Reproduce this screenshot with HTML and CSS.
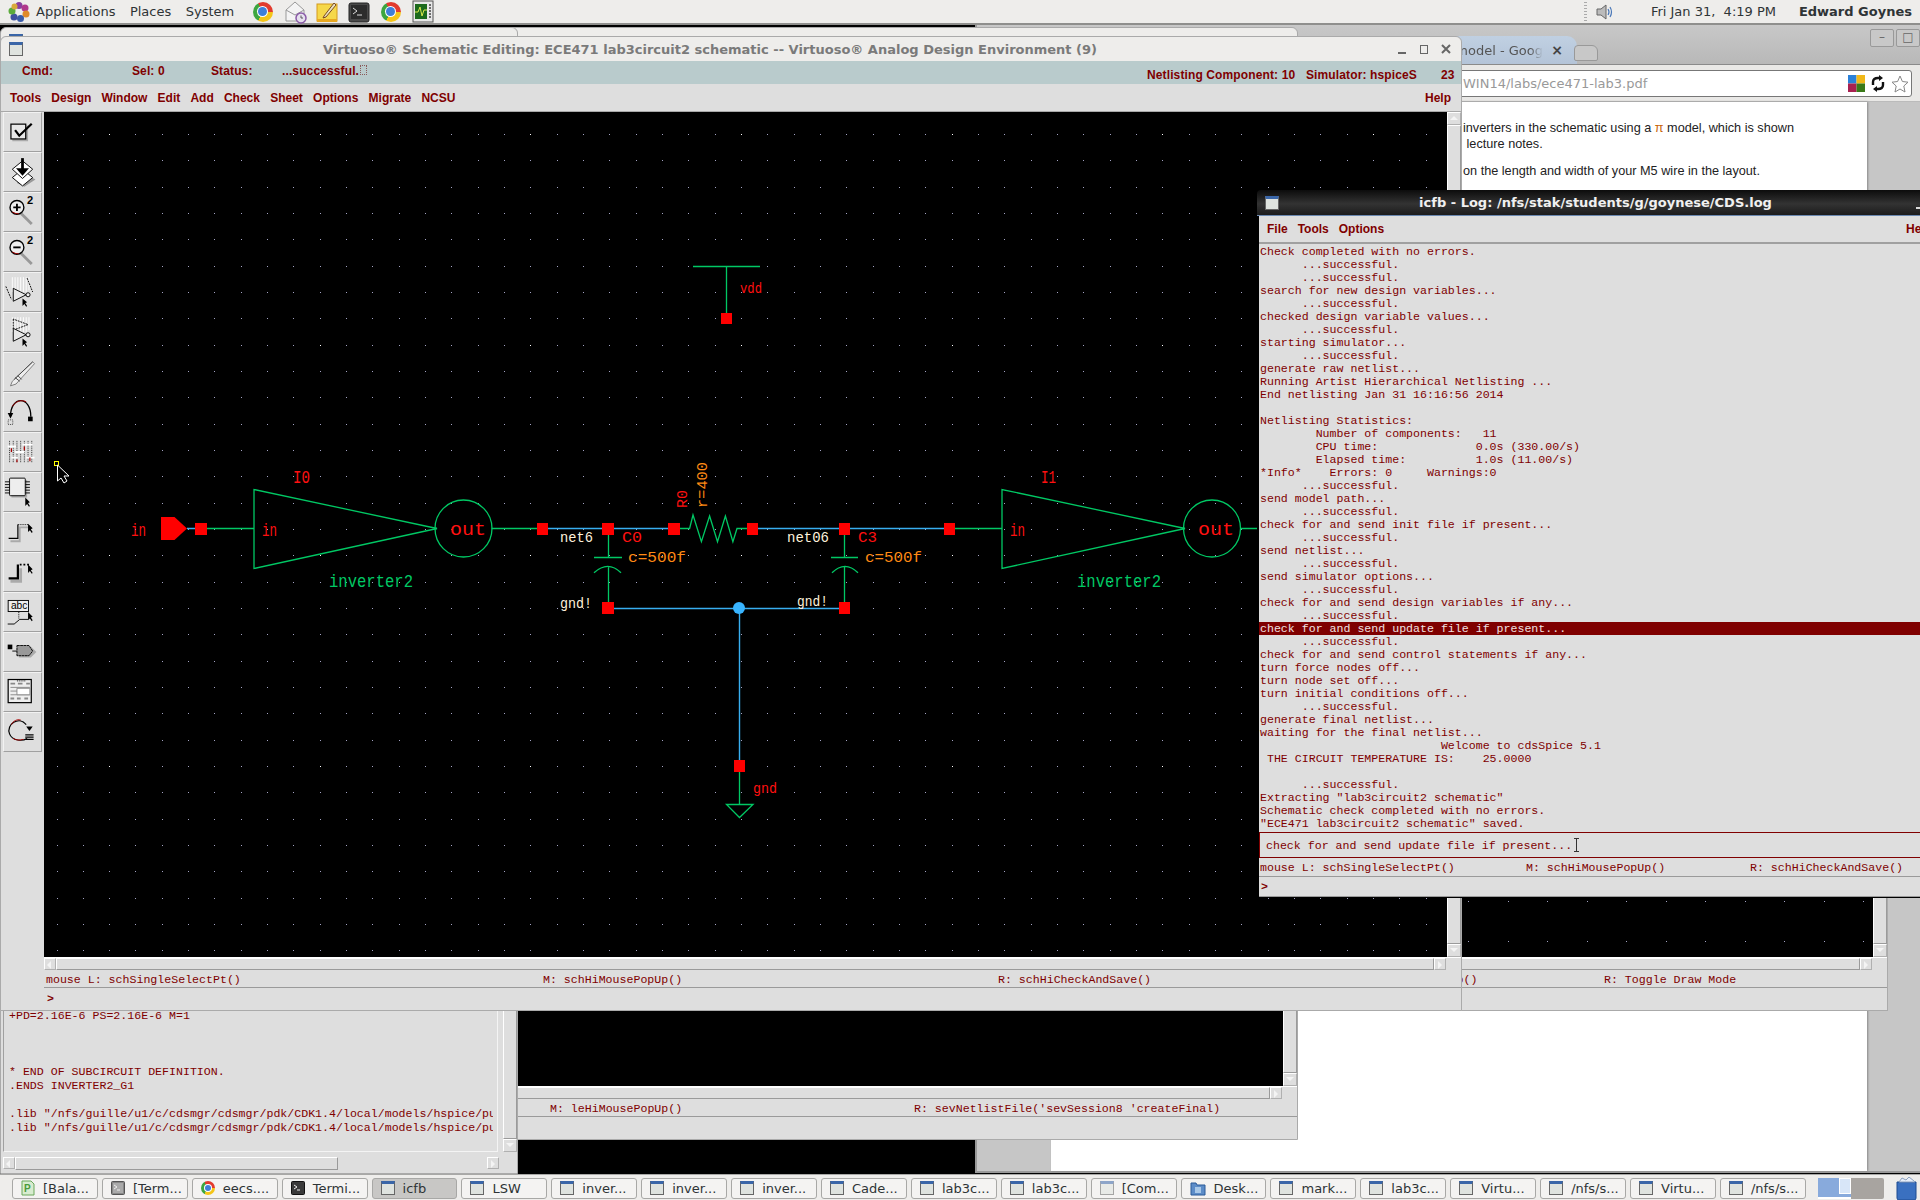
FILE: index.html
```html
<!DOCTYPE html>
<html lang="en">
<head>
  <meta charset="UTF-8" />
  <title>Virtuoso Schematic Editing</title>
  <link rel="stylesheet" href="styles.css">
</head>
<body>

  <!-- top gnome panel -->
  <div class="panel">
    <svg class="foot" width="24" height="22" viewBox="0 0 24 22">
      <circle cx="12" cy="4.5" r="3.5" fill="#8a3fa0"/><circle cx="18" cy="7" r="3.5" fill="#b0388c"/>
      <circle cx="19" cy="13" r="3.5" fill="#e08a2a"/><circle cx="13.5" cy="17.5" r="3.5" fill="#3a5ba8"/>
      <circle cx="7" cy="16" r="3.5" fill="#3f4fa0"/><circle cx="5" cy="10" r="3.5" fill="#5cab3c"/>
      <circle cx="7.5" cy="5.5" r="3" fill="#d9a83a"/><circle cx="12" cy="11" r="3" fill="#eee"/>
    </svg>
    <span class="panel-menu">Applications</span>
    <span class="panel-menu">Places</span>
    <span class="panel-menu">System</span>
    <div class="launchers">
      <span class="chrome big"></span>
      <svg width="24" height="24" viewBox="0 0 24 24"><path d="M3 10 L12 2 L21 10 V21 H3Z" fill="#f4f4f4" stroke="#999"/><path d="M3 10 L12 15 L21 10" fill="none" stroke="#999"/><circle cx="18" cy="18" r="5" fill="#e6e0ee" stroke="#8a5aa8" stroke-width="1.5"/><path d="M18 15.5V18H20" fill="none" stroke="#555"/></svg>
      <svg width="24" height="24" viewBox="0 0 24 24"><rect x="2" y="4" width="20" height="17" fill="#f6d84a" stroke="#d49a1c"/><rect x="2" y="19" width="20" height="3" fill="#e8a820"/><path d="M9 16 L19 3 L21 5 L11 17 L8 18Z" fill="#e8e0c0" stroke="#7a4a20"/></svg>
      <svg width="24" height="24" viewBox="0 0 24 24"><rect x="2" y="3" width="20" height="19" rx="2" fill="#4a4a4a" stroke="#222"/><rect x="4" y="5" width="16" height="14" fill="#2c2c2c"/><path d="M6 8 L10 11 L6 14" fill="none" stroke="#ddd"/><path d="M10 15H15" stroke="#ddd"/></svg>
      <span class="chrome big"></span>
      <svg width="24" height="24" viewBox="0 0 24 24"><rect x="2" y="1" width="20" height="21" fill="#e8e8e8" stroke="#555"/><rect x="4" y="4" width="12" height="15" fill="#1c6a1c"/><path d="M4 12H7L9 7L11 16L13 10H16" fill="none" stroke="#d8e84a"/><path d="M18 5h2M18 8h2M18 11h2M18 14h2M18 17h2" stroke="#444" stroke-width="1.5"/></svg>
    </div>
    <div class="panel-right">
      <span class="panel-grip"></span>
      <svg width="20" height="20" viewBox="0 0 20 20"><path d="M2 7H6L11 3V17L6 13H2Z" fill="#bbb" stroke="#666"/><path d="M13 7Q15 10 13 13M15 5Q18 10 15 15" fill="none" stroke="#4a78b8" stroke-width="1.2"/></svg>
      <span class="clock">Fri Jan 31,&nbsp; 4:19 PM</span>
      <span class="user">Edward Goynes</span>
    </div>
  </div>

  <div class="desktop">

    <!-- chrome window with the lab pdf, lowest in the stack -->
    <div class="window browser">
      <div class="tabstrip">
        <div class="tab"><span class="tab-text">model - Google</span><span class="tab-close">×</span></div>
        <div class="tab-new"></div>
        <div class="browser-ctl"><span>&#8211;</span><span>&#9633;</span></div>
      </div>
      <div class="toolbar-row">
        <div class="address">
          <span class="url">WIN14/labs/ece471-lab3.pdf</span>
          <svg width="17" height="17" viewBox="0 0 17 17"><rect width="8.5" height="8.5" fill="#2a80d8"/><rect x="8.5" width="8.5" height="8.5" fill="#f0b818"/><rect y="8.5" width="8.5" height="8.5" fill="#a82050"/><rect x="8.5" y="8.5" width="8.5" height="8.5" fill="#3a7a18"/></svg>
          <svg width="16" height="17" viewBox="0 0 16 17"><path d="M3 10V7Q3 3 8 3H10M13 7V10Q13 14 8 14H6" fill="none" stroke="#111" stroke-width="2.4"/><path d="M9 0L13 3L9 6ZM7 11L3 14L7 17Z" fill="#111"/></svg>
          <svg width="18" height="18" viewBox="0 0 18 18"><path d="M9 1L11.4 6.5L17 7.2L12.8 11L14 17L9 14L4 17L5.2 11L1 7.2L6.6 6.5Z" fill="#fff" stroke="#888"/></svg>
        </div>
      </div>
      <div class="pdf-area">
        <div class="pdf-page">
          <p class="pdf-line">inverters in the schematic using a <span class="pi">π</span> model, which is shown</p>
          <p class="pdf-line"> lecture notes.</p>
          <p class="pdf-line gap">on the length and width of your M5 wire in the layout.</p>
        </div>
      </div>
    </div>

    <!-- layout editor, only its right edge shows -->
    <div class="window cad layout-right">
      <div class="cad-body">
        <div class="canvas-row">
          <div class="canvas"><svg class="grid" width="1000" height="660" viewBox="874 298 1000 660" data-x0="1467" data-y0="900" data-step="39.5"></svg></div>
          <div class="vscroll"><span class="arrow up"></span><span class="thumb"></span><span class="arrow down"></span></div>
        </div>
        <div class="hscroll"><span class="arrow left"></span><span class="thumb"></span><span class="arrow right"></span></div>
        <div class="cad-status"><span class="st-l"></span><span class="st-m">M: lePopUp()</span><span class="st-r draw">R: Toggle Draw Mode</span></div>
        <div class="cad-prompt"></div>
      </div>
    </div>

    <!-- analog env window behind the schematic -->
    <div class="window cad layout-back">
      <div class="back-title"><span class="win-icon"></span><span class="back-title-text">Virtuoso® Schematic Editing: ECE471 lab3circuit2 schematic</span></div>
      <div class="cad-body">
        <div class="canvas-row">
          <div class="canvas"></div>
          <div class="vscroll"><span class="arrow up"></span><span class="thumb"></span><span class="arrow down"></span></div>
        </div>
        <div class="hscroll"><span class="arrow left"></span><span class="thumb"></span><span class="arrow right"></span></div>
        <div class="cad-status"><span class="st-l"></span><span class="st-m">M: leHiMousePopUp()</span><span class="st-r">R: sevNetlistFile('sevSession8 'createFinal)</span></div>
        <div class="cad-prompt"></div>
      </div>
    </div>

    <!-- netlist viewer, bottom left -->
    <div class="window netlist">
      <div class="back-title"><span class="win-icon"></span></div>
      <div class="netlist-main">
        <div class="netlist-text"><pre class="mono">+PD=2.16E-6 PS=2.16E-6 M=1



* END OF SUBCIRCUIT DEFINITION.
.ENDS INVERTER2_G1

.lib "/nfs/guille/u1/c/cdsmgr/cdsmgr/pdk/CDK1.4/local/models/hspice/public/publicMOS"
.lib "/nfs/guille/u1/c/cdsmgr/cdsmgr/pdk/CDK1.4/local/models/hspice/public/publicMOS"</pre></div>
        <div class="vscroll"><span class="arrow up"></span><span class="thumb"></span><span class="arrow down"></span></div>
      </div>
      <div class="hscroll netlist-h"><span class="arrow left"></span><span class="thumb short"></span><span class="track"></span><span class="arrow right"></span></div>
    </div>

    <!-- main schematic window -->
    <div class="window cad main">
      <div class="titlebar">
        <span class="win-icon"></span>
        <span class="title-text">Virtuoso® Schematic Editing: ECE471 lab3circuit2 schematic -- Virtuoso® Analog Design Environment (9)</span>
        <div class="win-ctl">
          <svg width="64" height="24" viewBox="0 0 64 24"><path d="M1 16H9" stroke="#666" stroke-width="2"/><rect x="23.5" y="8.5" width="7" height="8" fill="none" stroke="#666"/><path d="M45 8L53 16M53 8L45 16" stroke="#666" stroke-width="2"/></svg>
        </div>
      </div>
      <div class="statusbar">
        <span class="s-cmd">Cmd:</span>
        <span class="s-sel">Sel: 0</span>
        <span class="s-status">Status:</span>
        <span class="s-msg">...successful.<i class="s-box"></i></span>
        <span class="s-net">Netlisting Component: 10</span>
        <span class="s-sim">Simulator: hspiceS</span>
        <span class="s-num">23</span>
      </div>
      <div class="menubar">
        <span>Tools</span><span>Design</span><span>Window</span><span>Edit</span><span>Add</span><span>Check</span><span>Sheet</span><span>Options</span><span>Migrate</span><span>NCSU</span>
        <span class="menu-help">Help</span>
      </div>
      <div class="main-body">
        <div class="toolbox">
          <div class="tool"><svg viewBox="0 0 40 40"><rect x="9" y="13" width="17" height="17" fill="#aaa"/><rect x="7.5" y="11.5" width="16" height="16" fill="#e8e8e8" stroke="#000" stroke-width="1.3"/><path d="M12 18L16.5 24L30 11" fill="none" stroke="#000" stroke-width="2.4"/></svg></div>
          <div class="tool"><svg viewBox="0 0 40 40"><path d="M20 20L34 28L22 36L14 32Z" fill="#999"/><path d="M20 17L31 26L20 35L9 26Z" fill="#fff" stroke="#000"/><path d="M20 8L31 17L20 27L9 17Z" fill="#fff" stroke="#000"/><path d="M20 5V20" stroke="#000" stroke-width="3"/><path d="M13 16L20 24L27 16Z" fill="#000"/></svg></div>
          <div class="tool"><svg viewBox="0 0 40 40"><path d="M18 21L30 33" stroke="#999" stroke-width="3"/><circle cx="14" cy="15" r="7.5" fill="#eee" stroke="#000" stroke-width="1.5"/><path d="M10 15H18M14 11V19" stroke="#000" stroke-width="2"/><path d="M9 20Q12 22 16 22" stroke="#a00" fill="none"/><text x="25" y="11" class="ic-num">2</text></svg></div>
          <div class="tool"><svg viewBox="0 0 40 40"><path d="M18 21L30 33" stroke="#999" stroke-width="3"/><circle cx="14" cy="15" r="7.5" fill="#eee" stroke="#000" stroke-width="1.5"/><path d="M10 15H18" stroke="#000" stroke-width="2"/><path d="M9 20Q12 22 16 22" stroke="#a00" fill="none"/><text x="25" y="11" class="ic-num">2</text></svg></div>
          <div class="tool"><svg viewBox="0 0 40 40"><path d="M9 4V20M12 4V20M15 4V20M18 4V20M21 4V20M24 4V20M27 4V18" stroke="#fff"/><path d="M2 14L8 28M25 5L31 20" stroke="#000" stroke-dasharray="2 1" fill="none"/><path d="M10 16V30L24 23Z" fill="#e8e8e8" stroke="#000"/><circle cx="26" cy="23" r="2.2" fill="#eee" stroke="#000"/><path d="M20 27V35L22 33L24 36L25 35L23 32L25 31Z" fill="#000"/></svg></div>
          <div class="tool"><svg viewBox="0 0 40 40"><path d="M9 4V20M12 4V20M15 4V20M18 4V20M21 4V20M24 4V20M27 4V18" stroke="#fff"/><path d="M10 6V18L26 12Z" fill="none" stroke="#000" stroke-dasharray="2 1"/><path d="M10 16V30L24 23Z" fill="#e8e8e8" stroke="#000"/><circle cx="26" cy="23" r="2.2" fill="#eee" stroke="#000"/><path d="M20 27V35L22 33L24 36L25 35L23 32L25 31Z" fill="#000"/></svg></div>
          <div class="tool"><svg viewBox="0 0 40 40"><path d="M31 9L9 30L7 35L13 33L33 11Z" fill="#eee" stroke="#777"/><path d="M31 9L11 28" stroke="#444"/><path d="M12 26L17 30M15 24L19 28" stroke="#444"/></svg></div>
          <div class="tool"><svg viewBox="0 0 40 40"><path d="M7 25C7 2 29 2 29 25" fill="none" stroke="#000" stroke-width="1.4"/><path d="M9 14C12 9 18 6 24 9" fill="none" stroke="#a00"/><rect x="26" y="25" width="5" height="5" fill="#000"/><path d="M4 21H10L7 27Z" fill="#000"/><rect x="4.5" y="28.5" width="5" height="5" fill="none" stroke="#444" stroke-dasharray="1 1"/></svg></div>
          <div class="tool"><svg viewBox="0 0 40 40"><path d="M6 8V32M10 8V32M14 8V32M18 8V32M22 8V32M26 8V32M30 8V32" stroke="#222" stroke-dasharray="1 1"/><path d="M4 14H13M12 20H22M20 12H31M24 26H33M8 26H15" stroke="#fff" stroke-width="2"/><path d="M8 16V20M22 14V18M28 26V30M14 28V31" stroke="#a00" stroke-width="1.3"/></svg></div>
          <div class="tool"><svg viewBox="0 0 40 40"><rect x="8" y="7" width="17" height="19" fill="#aaa"/><rect x="6" y="5" width="17" height="19" rx="1" fill="#eee" stroke="#000"/><path d="M1 9H6M1 12H6M1 15H6M1 18H6M1 21H6M23 9H28M23 12H28M23 15H28M23 18H28M23 21H28" stroke="#000"/><path d="M23 26V35L25 33L27 36L28 35L26 32L28 31Z" fill="#000"/></svg></div>
          <div class="tool"><svg viewBox="0 0 40 40"><path d="M6 29H16V14H28" fill="none" stroke="#aaa" stroke-width="2" transform="translate(1 1)"/><path d="M5 27H15V12" fill="none" stroke="#000" stroke-width="1.3"/><path d="M15 12H27" stroke="#000" stroke-dasharray="1 1"/><path d="M26 11V20L28 18L30 21L31 20L29 17L31 16Z" fill="#000"/></svg></div>
          <div class="tool"><svg viewBox="0 0 40 40"><path d="M6 29H17V15" fill="none" stroke="#aaa" stroke-width="3" transform="translate(1 1)"/><path d="M5 27H15V12" fill="none" stroke="#000" stroke-width="2.4"/><path d="M17 12H27" stroke="#000" stroke-width="2" stroke-dasharray="2 2"/><path d="M26 12V21L28 19L30 22L31 21L29 18L31 17Z" fill="#000"/></svg></div>
          <div class="tool"><svg viewBox="0 0 40 40"><rect x="4.5" y="7.5" width="22" height="12" fill="#eee" stroke="#000"/><text x="7.5" y="17" class="ic-abc">abc</text><path d="M4 33H11L17 28H26" fill="none" stroke="#000"/><path d="M16 20V27" stroke="#000" stroke-dasharray="1 1"/><path d="M26 20V29L28 27L30 30L31 29L29 26L31 25Z" fill="#000"/></svg></div>
          <div class="tool"><svg viewBox="0 0 40 40"><path d="M16 14H29L35 20L29 26H16Z" fill="#aaa"/><rect x="4" y="12" width="5" height="5" fill="#000"/><path d="M9 19H14" stroke="#000"/><path d="M14 13H27L31 19L27 24H14Z" fill="#999" stroke="#000" stroke-dasharray="3 .5"/></svg></div>
          <div class="tool"><svg viewBox="0 0 40 40"><rect x="4.5" y="6.5" width="25" height="25" fill="#eee" stroke="#000" stroke-width="1.3"/><path d="M14 8H24" stroke="#000" stroke-dasharray="1 1"/><path d="M7 11H12M15 11H20M24 11H28M7 27H11M14 27H18M22 27H26" stroke="#888" stroke-width="2"/><path d="M7 15H28M7 19H28M7 23H28" stroke="#888"/><path d="M14 16H28V23H14Z" fill="#fff" stroke="#888"/></svg></div>
          <div class="tool"><svg viewBox="0 0 40 40"><path d="M24 12C16 2 2 12 6 22C9 30 20 30 25 27" fill="none" stroke="#000" stroke-width="1.3"/><path d="M8 12C10 8 14 6 18 7M10 27C13 29 17 29 21 28" fill="none" stroke="#a00"/><path d="M24 14H31L27.5 19Z" fill="#000"/><path d="M23 23H32M23 25.5H32M23 28H32" stroke="#000" stroke-width="1.3"/></svg></div>
        </div>
        <div class="cad-body">
          <div class="canvas-row">
            <div class="canvas">
              <svg class="grid schematic" width="1403" height="846" viewBox="44 112 1403 846" data-x0="56.5" data-y0="134" data-step="26.33" data-major="8" data-kmaj="2">
                <!-- green symbol strokes -->
                <g class="sym">
                  <path d="M207 528.5H254M254 489.5V568.5L437 528.5ZM491.5 528.5H537M680 528.5H689.6L693 515L701.4 541.7L709.6 516L717.5 541.7L725.4 516L732.9 541.7L737 528.5H747M955 528.5H1002M1002 489.5V568.5L1185 528.5ZM1240.5 528.5H1258"/>
                  <circle cx="463.5" cy="528.5" r="28.5"/><circle cx="1212" cy="528.5" r="28.5"/>
                  <path d="M434 528.5H437M1182 528.5H1185"/>
                  <path d="M608.5 535V557M594 557.5H622M594 572.7Q608 560 621 572.7M608.5 566V602"/>
                  <path d="M844.5 535V557M831 557.5H858M832 572.7Q845 560 858 572.7M844.5 566V602"/>
                  <path d="M739.5 772V804M726.5 804.5H753L739.5 817.5Z"/>
                  <path d="M693 266.5H760M726.5 266V313"/>
                </g>
                <!-- nets -->
                <g class="net">
                  <path d="M187 528.5H195M548 528.5H602M614 528.5H668M758 528.5H839M850 528.5H944"/>
                  <path d="M614 608.5H839M739.5 608V760"/>
                </g>
                <circle cx="739" cy="608" r="6" class="dot"/>
                <path d="M161 517H174.5L187 528.5L174.5 540H161Z" class="pin"/>
                <g class="pin">
                  <rect x="195" y="523" width="12" height="12"/><rect x="537" y="523" width="11" height="12"/>
                  <rect x="602" y="523" width="12" height="12"/><rect x="668" y="523" width="12" height="12"/>
                  <rect x="747" y="523" width="11" height="12"/><rect x="839" y="523" width="11" height="12"/>
                  <rect x="944" y="523" width="11" height="12"/><rect x="602" y="602" width="12" height="12"/>
                  <rect x="839" y="602" width="11" height="12"/><rect x="734" y="760" width="11" height="12"/>
                  <rect x="721" y="313" width="11" height="11"/>
                </g>
                <text x="131" y="536" textLength="15" lengthAdjust="spacingAndGlyphs" class="lbl red big">in</text>
                <text x="262" y="536" textLength="15" lengthAdjust="spacingAndGlyphs" class="lbl red big">in</text>
                <text x="293" y="483" textLength="17" lengthAdjust="spacingAndGlyphs" class="lbl red big">I0</text>
                <text x="450" y="535" textLength="36" lengthAdjust="spacingAndGlyphs" class="lbl red big">out</text>
                <text x="329" y="587" textLength="84" lengthAdjust="spacingAndGlyphs" class="lbl green big">inverter2</text>
                <text x="1010" y="536" textLength="15" lengthAdjust="spacingAndGlyphs" class="lbl red big">in</text>
                <text x="1041" y="483" textLength="15" lengthAdjust="spacingAndGlyphs" class="lbl red big">I1</text>
                <text x="1198" y="535" textLength="36" lengthAdjust="spacingAndGlyphs" class="lbl red big">out</text>
                <text x="1077" y="587" textLength="84" lengthAdjust="spacingAndGlyphs" class="lbl green big">inverter2</text>
                <text x="560" y="542" textLength="33" lengthAdjust="spacingAndGlyphs" class="lbl cream">net6</text>
                <text x="622" y="542" textLength="20" lengthAdjust="spacingAndGlyphs" class="lbl red">C0</text>
                <text x="628" y="562" textLength="58" lengthAdjust="spacingAndGlyphs" class="lbl orange">c=500f</text>
                <text x="560" y="608" textLength="32" lengthAdjust="spacingAndGlyphs" class="lbl cream">gnd!</text>
                <text x="787" y="542" textLength="42" lengthAdjust="spacingAndGlyphs" class="lbl cream">net06</text>
                <text x="858" y="542" textLength="19" lengthAdjust="spacingAndGlyphs" class="lbl red">C3</text>
                <text x="865" y="562" textLength="57" lengthAdjust="spacingAndGlyphs" class="lbl orange">c=500f</text>
                <text x="797" y="606" textLength="31" lengthAdjust="spacingAndGlyphs" class="lbl cream">gnd!</text>
                <text x="753" y="793" textLength="24" lengthAdjust="spacingAndGlyphs" class="lbl red">gnd</text>
                <text x="740" y="293" textLength="22" lengthAdjust="spacingAndGlyphs" class="lbl red">vdd</text>
                <text x="687" y="508" textLength="18" lengthAdjust="spacingAndGlyphs" transform="rotate(-90 687 508)" class="lbl red">R0</text>
                <text x="707" y="508" textLength="46" lengthAdjust="spacingAndGlyphs" transform="rotate(-90 707 508)" class="lbl orange">r=400</text>
                <!-- mouse pointer with its snap square -->
                <rect x="54.5" y="461.5" width="4" height="4" fill="none" stroke="#ffff00"/>
                <path d="M57.5 465V481L61 478L64 483L67 481L64 476L69 476Z" fill="#000" stroke="#fff"/>
              </svg>
            </div>
            <div class="vscroll"><span class="arrow up"></span><span class="thumb"></span><span class="arrow down"></span></div>
          </div>
          <div class="hscroll"><span class="arrow left"></span><span class="thumb"></span><span class="arrow right"></span></div>
          <div class="cad-status main-status"><span class="st-l">mouse L: schSingleSelectPt()</span><span class="st-m">M: schHiMousePopUp()</span><span class="st-r">R: schHiCheckAndSave()</span></div>
          <div class="cad-prompt"><b>&gt;</b></div>
        </div>
      </div>
    </div>

    <!-- icfb log -->
    <div class="window log">
      <div class="log-title">
        <span class="win-icon"></span>
        <span class="log-title-text">icfb - Log: /nfs/stak/students/g/goynese/CDS.log</span>
        <span class="log-min"></span>
      </div>
      <div class="log-menu"><span>File</span><span>Tools</span><span>Options</span><span class="menu-help">Help</span></div>
      <pre class="mono log-text">Check completed with no errors.
      ...successful.
      ...successful.
search for new design variables...
      ...successful.
checked design variable values...
      ...successful.
starting simulator...
      ...successful.
generate raw netlist...
Running Artist Hierarchical Netlisting ...
End netlisting Jan 31 16:16:56 2014

Netlisting Statistics:
        Number of components:   11
        CPU time:              0.0s (330.00/s)
        Elapsed time:          1.0s (11.00/s)
*Info*    Errors: 0     Warnings:0
      ...successful.
send model path...
      ...successful.
check for and send init file if present...
      ...successful.
send netlist...
      ...successful.
send simulator options...
      ...successful.
check for and send design variables if any...
      ...successful.
<span class="hl">check for and send update file if present...</span>      ...successful.
check for and send control statements if any...
turn force nodes off...
turn node set off...
turn initial conditions off...
      ...successful.
generate final netlist...
waiting for the final netlist...
                          Welcome to cdsSpice 5.1
 THE CIRCUIT TEMPERATURE IS:    25.0000

      ...successful.
Extracting "lab3circuit2 schematic"
Schematic check completed with no errors.
"ECE471 lab3circuit2 schematic" saved.</pre>
      <div class="log-input mono">check for and send update file if present...<i class="ibeam"></i></div>
      <div class="log-status mono"><span class="ls-l">mouse L: schSingleSelectPt()</span><span class="ls-m">M: schHiMousePopUp()</span><span>R: schHiCheckAndSave()</span></div>
      <div class="log-prompt mono"><b>&gt;</b></div>
    </div>

  </div>

  <!-- window list -->
  <div class="taskbar">
    <div class="task"><svg class="task-ic" width="14" height="16" viewBox="0 0 14 16"><path d="M1 1H10L13 4V15H1Z" fill="#d8ecd0" stroke="#6aa85a"/><text x="3" y="12" class="ic-p">P</text></svg>[Bala...</div>
    <div class="task"><svg class="task-ic" width="14" height="14" viewBox="0 0 14 14"><rect x=".5" y=".5" width="13" height="13" rx="1" fill="#888" stroke="#555"/><rect x="2" y="2" width="10" height="10" fill="#aaa"/><path d="M3 4L6 6L3 8M6 9H9" fill="none" stroke="#eee"/></svg>[Term...</div>
    <div class="task"><span class="chrome task-ic"></span>eecs....</div>
    <div class="task"><svg class="task-ic" width="14" height="14" viewBox="0 0 14 14"><rect x=".5" y=".5" width="13" height="13" rx="1" fill="#3a3a3a" stroke="#111"/><path d="M3 4L6 6L3 8M6 9H9" fill="none" stroke="#eee"/></svg>Termi...</div>
    <div class="task active"><span class="win-icon task-ic"></span>icfb</div>
    <div class="task"><span class="win-icon task-ic"></span>LSW</div>
    <div class="task"><span class="win-icon task-ic"></span>inver...</div>
    <div class="task"><span class="win-icon task-ic"></span>inver...</div>
    <div class="task"><span class="win-icon task-ic"></span>inver...</div>
    <div class="task"><span class="win-icon task-ic"></span>Cade...</div>
    <div class="task"><span class="win-icon task-ic"></span>lab3c...</div>
    <div class="task"><span class="win-icon task-ic"></span>lab3c...</div>
    <div class="task"><span class="win-icon task-ic faint"></span>[Com...</div>
    <div class="task"><svg class="task-ic" width="16" height="16" viewBox="0 0 16 16"><path d="M1 3H6L7 5H15V15H1Z" fill="#5c8cc8" stroke="#2a5a98"/><rect x="5" y="7" width="6" height="6" fill="#a8c8e8"/></svg>Desk...</div>
    <div class="task"><span class="win-icon task-ic"></span>mark...</div>
    <div class="task"><span class="win-icon task-ic"></span>lab3c...</div>
    <div class="task"><span class="win-icon task-ic"></span>Virtu...</div>
    <div class="task"><span class="win-icon task-ic"></span>/nfs/s...</div>
    <div class="task"><span class="win-icon task-ic"></span>Virtu...</div>
    <div class="task"><span class="win-icon task-ic"></span>/nfs/s...</div>
    <div class="pager"><div class="pager-on"><span class="mini-a"></span><span class="mini-b"></span></div></div>
    <svg class="trash" width="21" height="23" viewBox="0 0 21 23"><path d="M1 5H20V21Q20 23 18 23H3Q1 23 1 21Z" fill="#3a70c0" stroke="#1c4a90"/><path d="M3 5L6 1L10 3L13 0L18 4L19 5Z" fill="#e8eef8" stroke="#8aa0c0"/></svg>
  </div>

  <script>
    // schematic grid, one dot per snap point
    document.querySelectorAll("svg.grid").forEach(function (svg) {
      const box = svg.getAttribute("viewBox").split(" ").map(Number);
      const step = parseFloat(svg.dataset.step);
      const major = parseInt(svg.dataset.major || "0");
      const kmaj = parseInt(svg.dataset.kmaj || "0");
      let minor = "", bright = "";
      for (let j = 0; ; j++) {
        const y = Math.round(parseFloat(svg.dataset.y0) + j * step);
        if (y > box[1] + box[3]) break;
        for (let k = 0; ; k++) {
          const x = Math.round(parseFloat(svg.dataset.x0) + k * step);
          if (x > box[0] + box[2]) break;
          const seg = "M" + x + " " + (y + 0.5) + "h1";
          if (major && j % major === 0 && k % major === kmaj) bright += seg;
          else minor += seg;
        }
      }
      const make = function (d, cls) {
        const p = document.createElementNS("http://www.w3.org/2000/svg", "path");
        p.setAttribute("d", d);
        p.setAttribute("class", cls);
        svg.insertBefore(p, svg.firstChild);
      };
      make(minor, "dots");
      make(bright, "dots bright");
    });
  </script>

</body>
</html>
```

FILE: styles.css
```css
:root {
  --panel: #eeedeb;
  --x-bg: #dedede;
  --maroon: #7f0000;
  --gtk-text: #2e3436;
}

* {
  box-sizing: border-box;
}

html, body {
  margin: 0;
  height: 100%;
}

body {
  width: 1920px;
  height: 1200px;
  overflow: hidden;
  background: #000;
  display: flex;
  flex-direction: column;
  font-family: "DejaVu Sans", sans-serif;
}

.mono {
  font-family: "Liberation Mono", monospace;
  font-size: 11.6px;
  color: var(--maroon);
  margin: 0;
}

/* top panel */
.panel {
  height: 25px;
  flex: none;
  background: var(--panel);
  border-bottom: 2px solid #8f8f8d;
  display: flex;
  align-items: center;
  font-size: 13px;
  color: var(--gtk-text);
  padding-left: 7px;
}

.foot {
  margin-right: 5px;
}

.panel-menu {
  margin-right: 14.5px;
}

.launchers {
  display: flex;
  align-items: center;
  gap: 8px;
  margin-left: 2px;
}

.chrome {
  display: inline-block;
  position: relative;
  width: 14px;
  height: 14px;
  border-radius: 50%;
  background: conic-gradient(#e23b2e 0 90deg, #f5c518 90deg 210deg, #3da63f 210deg 330deg, #e23b2e 330deg);
}

.chrome::after {
  content: "";
  position: absolute;
  inset: 28%;
  border-radius: 50%;
  background: #3f7fd8;
  box-shadow: 0 0 0 1px #fff;
}

.chrome.big {
  width: 20px;
  height: 20px;
  margin: 0 2px;
}

.panel-right {
  margin-left: auto;
  display: flex;
  align-items: center;
  padding-right: 8px;
}

.panel-grip {
  width: 3px;
  height: 20px;
  margin-right: 8px;
  background: repeating-linear-gradient(#aaa 0 1px, transparent 1px 3px);
}

.clock {
  margin-left: 36px;
  width: 148px;
}

.user {
  font-weight: bold;
}

/* desktop and windows */
.desktop {
  flex: 1;
  position: relative;
  overflow: hidden;
}

.window {
  position: absolute;
}

.win-icon {
  display: inline-block;
  flex: none;
  width: 14px;
  height: 14px;
  background: #dfe3df;
  border: 1px solid #666;
  border-top: 3px solid #3a66a8;
}

.win-icon.faint {
  opacity: .55;
}

/* chrome */
.browser {
  left: 975px;
  top: 0;
  width: 945px;
  height: 1148px;
  background: #c6c6c6;
  display: flex;
  flex-direction: column;
  border-left: 2px solid #999;
  border-bottom: 2px solid #999;
}

.tabstrip {
  height: 40px;
  flex: none;
  display: flex;
  align-items: flex-end;
  background: linear-gradient(#c8c8c8, #b8b8b8);
  border-bottom: 1px solid #8a8a8a;
  padding-left: 325px;
}

.tab {
  width: 275px;
  height: 28px;
  display: flex;
  align-items: center;
  justify-content: flex-end;
  padding-right: 14px;
  background: linear-gradient(#c0d0e2, #b4c4d8);
  border-radius: 6px 10px 0 0;
  font-size: 13px;
  color: #555;
}

.tab-text {
  margin-right: 8px;
  width: 88px;
  white-space: nowrap;
  overflow: hidden;
  -webkit-mask-image: linear-gradient(90deg, #000 85%, transparent);
}

.tab-close {
  font-weight: bold;
  font-size: 14px;
  color: #444;
}

.tab-new {
  width: 24px;
  height: 16px;
  margin: 0 0 3px -3px;
  border: 1px solid #999;
  border-radius: 4px 6px 2px 2px;
  background: #c8c8c8;
}

.browser-ctl {
  margin-left: auto;
  align-self: flex-start;
  margin-top: 4px;
  display: flex;
  gap: 2px;
}

.browser-ctl span {
  width: 24px;
  height: 18px;
  border: 1px solid #999;
  border-radius: 2px;
  text-align: center;
  font-size: 12px;
  line-height: 14px;
  color: #666;
  background: #c8c8c8;
}

.toolbar-row {
  height: 37px;
  flex: none;
  background: #e9e8e6;
  padding: 5px 8px 0 300px;
  border-bottom: 1px solid #bbb;
}

.address {
  height: 27px;
  background: #fff;
  border: 1px solid #777;
  border-radius: 3px;
  display: flex;
  align-items: center;
  gap: 5px;
  padding: 0 2px 0 185px;
  font-size: 13px;
  color: #999;
}

.url {
  margin-right: auto;
}

.pdf-area {
  flex: 1;
  padding: 0 53px 0 74px;
}

.pdf-page {
  height: 100%;
  background: #fff;
  padding: 18px 0 0 412px;
  font-family: "Liberation Sans", sans-serif;
  font-size: 12.7px;
  color: #222;
  box-shadow: 1px 0 2px #888;
}

.pdf-line {
  margin: 0;
  height: 16px;
  line-height: 16px;
  white-space: pre;
}

.pdf-line.gap {
  margin-top: 11px;
}

.pi {
  color: #c8640a;
}

/* cadence windows */
.cad {
  background: var(--x-bg);
  border: 1px solid #aaa;
  display: flex;
  flex-direction: column;
}

.cad-body {
  flex: 1;
  display: flex;
  flex-direction: column;
  min-width: 0;
  min-height: 0;
}

.canvas-row {
  flex: 1;
  display: flex;
  min-height: 0;
}

.canvas {
  flex: 1;
  background: #000;
  overflow: hidden;
  min-width: 0;
}

.vscroll {
  width: 14px;
  flex: none;
  display: flex;
  flex-direction: column;
  background: var(--x-bg);
}

.hscroll {
  height: 13px;
  flex: none;
  display: flex;
  padding-right: 15px;
  background: var(--x-bg);
  border-top: 1px solid #fff;
}

.thumb {
  flex: 1;
  background: var(--x-bg);
  border: 1px solid;
  border-color: #fff #9a9a9a #9a9a9a #fff;
}

.thumb.short {
  flex: none;
  width: 323px;
}

.track {
  flex: 1;
}

.arrow {
  flex: none;
  width: 12px;
  height: 12px;
  position: relative;
  border: 1px solid;
  border-color: #fff #b0b0b0 #b0b0b0 #fff;
  background: var(--x-bg);
}

.vscroll .arrow {
  width: 14px;
  height: 13px;
}

.arrow::after {
  content: "";
  position: absolute;
  left: 2px;
  top: 2px;
  width: 0;
  height: 0;
  border: 4px solid transparent;
}

.arrow.up::after {
  top: -1px;
  border-bottom-color: #f4f4f4;
}

.arrow.down::after {
  top: 3px;
  border-top-color: #f4f4f4;
}

.arrow.left::after {
  left: -2px;
  border-right-color: #f4f4f4;
}

.arrow.right::after {
  left: 3px;
  border-left-color: #f4f4f4;
}

.cad-status {
  height: 18px;
  flex: none;
  display: flex;
  align-items: center;
  border-bottom: 1px solid #9a9a9a;
  font-family: "Liberation Mono", monospace;
  font-size: 11.6px;
  color: var(--maroon);
  white-space: pre;
  padding: 1px 0 0 2px;
}

.main-status .st-l {
  width: 497px;
}

.main-status .st-m {
  width: 455px;
}

.cad-prompt {
  height: 22px;
  flex: none;
  padding: 3px 0 0 3px;
  font-family: "Liberation Mono", monospace;
  font-size: 11.6px;
  line-height: 16px;
  color: var(--maroon);
}

/* main schematic window */
.main {
  left: 0;
  top: 11px;
  width: 1462px;
  height: 975px;
  border-radius: 6px 6px 0 0;
}

.titlebar {
  height: 24px;
  flex: none;
  display: flex;
  align-items: center;
  padding-left: 8px;
  background: var(--panel);
  border-radius: 6px 6px 0 0;
}

.title-text {
  flex: 1;
  text-align: center;
  font-size: 13px;
  font-weight: bold;
  color: #7a7a7a;
}

.win-ctl {
  flex: none;
  width: 64px;
  height: 24px;
}

.statusbar {
  height: 23px;
  flex: none;
  display: flex;
  align-items: center;
  background: #b9cbcc;
  font-family: "Liberation Sans", sans-serif;
  font-size: 12px;
  font-weight: bold;
  letter-spacing: .12px;
  color: var(--maroon);
  white-space: nowrap;
  padding-left: 21px;
}

.s-cmd,
.s-sel,
.s-status,
.s-msg {
  margin-bottom: 4px;
}

.s-net,
.s-sim,
.s-num {
  margin-top: 4px;
}

.s-cmd {
  width: 110px;
}

.s-sel {
  width: 79px;
}

.s-status {
  width: 71px;
}

.s-msg {
  width: 865px;
}

.s-box {
  display: inline-block;
  width: 7px;
  height: 10px;
  margin-left: 1px;
  border: 1px dotted #8a5a5a;
}

.s-net {
  width: 159px;
}

.s-sim {
  width: 135px;
}

.menubar {
  height: 27px;
  flex: none;
  display: flex;
  align-items: center;
  gap: 10.2px;
  margin-top: 1px;
  padding: 0 10px 0 9px;
  background: var(--x-bg);
  border-bottom: 1px solid #a8a8a8;
  font-family: "Liberation Sans", sans-serif;
  font-size: 12px;
  font-weight: bold;
  color: var(--maroon);
}

.menu-help {
  margin-left: auto;
}

.main-body {
  flex: 1;
  display: flex;
  min-height: 0;
}

.toolbox {
  width: 43px;
  flex: none;
  padding: 0 2px;
}

.tool {
  width: 39px;
  height: 40px;
  border: 1px solid;
  border-color: #f2f2f2 #a0a0a0 #a0a0a0 #f2f2f2;
  background: var(--x-bg);
}

.tool svg {
  display: block;
  width: 37px;
  height: 38px;
}

.ic-num {
  font: bold 12px "Liberation Sans", sans-serif;
  fill: #000;
}

.ic-abc {
  font: 11px "Liberation Sans", sans-serif;
  fill: #000;
}

.ic-p {
  font: bold 10px "Liberation Sans", sans-serif;
  fill: #4a9a3a;
}

/* schematic drawing */
.schematic {
  display: block;
}

.dots {
  stroke: #a4a4c4;
  stroke-width: 1;
  shape-rendering: crispEdges;
  fill: none;
}

.dots.bright {
  stroke: #fff;
}

.sym {
  stroke: #00c864;
  stroke-width: 1.3;
  fill: none;
}

.net {
  stroke: #38aef0;
  stroke-width: 1.4;
  fill: none;
}

.dot {
  fill: #38b4ff;
}

.pin {
  fill: #ff0000;
}

.lbl {
  font-family: "Liberation Mono", monospace;
  font-size: 15px;
}

.lbl.big {
  font-size: 19px;
}

.red {
  fill: #ff1010;
}

.green {
  fill: #00c864;
}

.orange {
  fill: #ff8a14;
}

.cream {
  fill: #fff2dc;
}

/* window behind, right hand */
.layout-right {
  left: 874px;
  top: 273px;
  width: 1014px;
  height: 713px;
}

.layout-right .cad-status {
  padding-left: 0;
}

.layout-right .st-l {
  width: 519px;
}

.layout-right .st-m {
  width: 210px;
}

/* analog env window */
.layout-back {
  left: 100px;
  top: 2px;
  width: 1198px;
  height: 1113px;
  border-radius: 6px 6px 0 0;
}

.back-title {
  height: 24px;
  flex: none;
  display: flex;
  align-items: flex-start;
  padding: 6px 0 0 8px;
  background: var(--panel);
  border-radius: 6px 6px 0 0;
  overflow: hidden;
}

.back-title-text {
  margin-left: 363px;
  font-size: 12.5px;
  font-weight: bold;
  color: #999;
}

.layout-back .st-l {
  width: 447px;
}

.layout-back .st-m {
  width: 364px;
}

/* netlist viewer */
.netlist {
  left: 0;
  top: 2px;
  width: 518px;
  height: 1147px;
  background: var(--x-bg);
  border: 1px solid #aaa;
  display: flex;
  flex-direction: column;
  border-radius: 6px 6px 0 0;
}

.netlist-main {
  flex: 1;
  display: flex;
  min-height: 0;
  padding-left: 2px;
}

.netlist-text {
  flex: 1;
  display: flex;
  flex-direction: column;
  justify-content: flex-end;
  overflow: hidden;
  padding: 0 4px 16px 5px;
  margin-right: 5px;
  border: 1px solid;
  border-color: #a0a0a0 #f4f4f4 #f4f4f4 #a0a0a0;
}

.netlist-text pre {
  line-height: 14px;
  overflow: hidden;
}

.netlist .vscroll .thumb {
  border-top-color: transparent;
}

.netlist-h {
  height: 16px;
  margin: 5px 0 0 2px;
  padding: 0 18px 3px 0;
  border-top: 0;
}

/* icfb log */
.log {
  left: 1257px;
  top: 165px;
  width: 677px;
  height: 708px;
  background: #000;
  padding-left: 2px;
  display: flex;
  flex-direction: column;
}

.log-title {
  height: 26px;
  flex: none;
  margin-left: -2px;
  position: relative;
  display: flex;
  align-items: center;
  padding-left: 8px;
  background: linear-gradient(#0c0c0c, #333 55%, #1c1c1c);
  border-bottom: 1px solid #6a88b0;
  border-radius: 4px 0 0 0;
}

.log-title-text {
  flex: 1;
  text-align: center;
  padding-right: 22px;
  font-size: 13px;
  font-weight: bold;
  color: #f0f0f0;
}

.log-min {
  position: absolute;
  left: 659px;
  top: 17px;
  width: 9px;
  height: 2px;
  background: #ddd;
}

.log-menu {
  height: 28px;
  flex: none;
  display: flex;
  align-items: center;
  gap: 10px;
  padding: 0 2px 0 8px;
  background: var(--x-bg);
  border-bottom: 2px solid #a0a0a0;
  font-family: "Liberation Sans", sans-serif;
  font-size: 12px;
  font-weight: bold;
  color: var(--maroon);
}

.log-text {
  height: 588px;
  flex: none;
  background: var(--x-bg);
  padding: 1px 0 0 1px;
  line-height: 13px;
}

.hl {
  display: block;
  height: 13px;
  margin-left: -1px;
  padding-left: 1px;
  background: var(--maroon);
  color: #f0e0e0;
}

.log-input {
  height: 26px;
  flex: none;
  display: flex;
  align-items: center;
  padding-left: 6px;
  background: var(--x-bg);
  border: 1px solid var(--maroon);
  border-right: 0;
}

.ibeam {
  width: 5px;
  height: 14px;
  margin-left: 2px;
  border-top: 1px solid #333;
  border-bottom: 1px solid #333;
  background: linear-gradient(#333, #333) center / 1px 100% no-repeat;
}

.log-status {
  height: 19px;
  flex: none;
  display: flex;
  align-items: center;
  padding-left: 1px;
  background: var(--x-bg);
  border-bottom: 1px solid #9a9a9a;
  white-space: pre;
}

.ls-l {
  width: 266px;
}

.ls-m {
  width: 224px;
}

.log-prompt {
  height: 20px;
  flex: none;
  padding: 2px 0 0 2px;
  line-height: 16px;
  background: var(--x-bg);
  border-bottom: 1px solid #9a9a9a;
}

/* bottom window list */
.taskbar {
  height: 26px;
  flex: none;
  display: flex;
  align-items: center;
  gap: 4px;
  padding: 1px 0 0 12px;
  background: var(--panel);
  border-top: 1px solid #a8a8a6;
  font-size: 13px;
  color: var(--gtk-text);
}

.task {
  width: 85.9px;
  height: 21px;
  flex: none;
  display: flex;
  align-items: center;
  padding-left: 8px;
  background: #f4f3f2;
  border: 1px solid #a8a8a6;
  border-radius: 3px;
  white-space: nowrap;
}

.task.active {
  background: #c8c7c5;
}

.task-ic {
  margin-right: 8px;
  flex: none;
}

.pager {
  width: 66px;
  height: 21px;
  margin-left: 8px;
  background: #a8a4a0;
  border-radius: 2px;
  flex: none;
}

.pager-on {
  width: 33px;
  height: 21px;
  background: #88aadc;
  position: relative;
  border-bottom: 2px solid #fff;
}

.mini-a {
  position: absolute;
  right: 0;
  top: 0;
  width: 12px;
  height: 16px;
  background: #d8e6f8;
  border: 1px solid #fff;
}

.trash {
  margin-left: 8px;
  flex: none;
}
```
